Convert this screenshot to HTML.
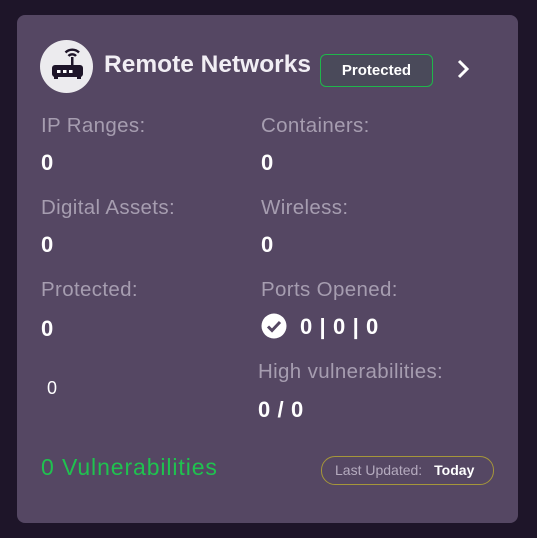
<!DOCTYPE html>
<html><head><style>
body{margin:0;width:537px;height:538px;background:#1e1529;font-family:"Liberation Sans",sans-serif;position:relative;overflow:hidden}
.card{position:absolute;left:17px;top:15px;width:501px;height:508px;background:#554763;border-radius:8px}
.a{position:absolute;white-space:nowrap}
.l{color:#a69db0;font-size:20.5px;letter-spacing:0.35px}
.v{color:#fff;font-size:22px;letter-spacing:0.6px;font-weight:bold}
</style></head><body>
<div class="card"></div>
<div class="a" style="left:40px;top:40px;width:53px;height:53px;border-radius:50%;background:#ecebee"></div>
<svg class="a" style="left:40px;top:40px" width="53" height="53" viewBox="0 0 53 53">
<rect x="12" y="25" width="31" height="12" rx="3" fill="#1e1529"/>
<rect x="14" y="36" width="4" height="3" fill="#1e1529"/><rect x="37" y="36" width="4" height="3" fill="#1e1529"/>
<rect x="17" y="30" width="3.5" height="3" fill="#fff"/><rect x="23" y="30" width="3.5" height="3" fill="#fff"/><rect x="29" y="30" width="3.5" height="3" fill="#fff"/>
<rect x="31" y="17" width="2.5" height="9" fill="#1e1529"/>
<path d="M28.5 16a5 5 0 0 1 7.5 0M25.5 12.5a9.5 9.5 0 0 1 13.5 0" stroke="#1e1529" stroke-width="2.4" fill="none"/>
</svg>
<div class="a" style="left:104px;top:51px;color:#f1eef4;font-size:24.5px;font-weight:bold">Remote Networks</div>
<div class="a" style="left:320px;top:54px;width:111px;height:31px;border:1px solid #1fb64b;border-radius:6px;background:#4a4a5a;color:#fff;font-weight:bold;font-size:15px;text-align:center;line-height:31px">Protected</div>
<svg class="a" style="left:455px;top:58px" width="16" height="22"><path d="M4 3l8 8-8 8" stroke="#fff" stroke-width="3" fill="none"/></svg>
<div class="a l" style="left:41px;top:114px">IP Ranges:</div>
<div class="a v" style="left:41px;top:150px">0</div>
<div class="a l" style="left:261px;top:114px">Containers:</div>
<div class="a v" style="left:261px;top:150px">0</div>
<div class="a l" style="left:41px;top:196px">Digital Assets:</div>
<div class="a v" style="left:41px;top:232px">0</div>
<div class="a l" style="left:261px;top:196px">Wireless:</div>
<div class="a v" style="left:261px;top:232px">0</div>
<div class="a l" style="left:41px;top:278px">Protected:</div>
<div class="a v" style="left:41px;top:316px">0</div>
<div class="a l" style="left:261px;top:278px">Ports Opened:</div>
<svg class="a" style="left:261px;top:313px" width="26" height="26"><circle cx="13" cy="13" r="12.5" fill="#fff"/><path d="M7 13.5l4 4 8-8.5" stroke="#554763" stroke-width="3" fill="none"/></svg>
<div class="a v" style="left:300px;top:314px">0 | 0 | 0</div>
<div class="a" style="left:47px;top:378px;color:#fff;font-size:18px">0</div>
<div class="a l" style="left:258px;top:360px">High vulnerabilities:</div>
<div class="a v" style="left:258px;top:397px">0 / 0</div>
<div class="a" style="left:41px;top:454px;color:#1fc24f;font-size:23px;letter-spacing:0.9px">0 Vulnerabilities</div>
<div class="a" style="left:321px;top:456px;width:171px;height:27px;border:1px solid #a5963a;border-radius:14px;font-size:14px;line-height:27px;color:#b5abbf"><span style="margin-left:13px">Last Updated:</span><span style="color:#fff;margin-left:12px;font-weight:bold">Today</span></div>
</body></html>
